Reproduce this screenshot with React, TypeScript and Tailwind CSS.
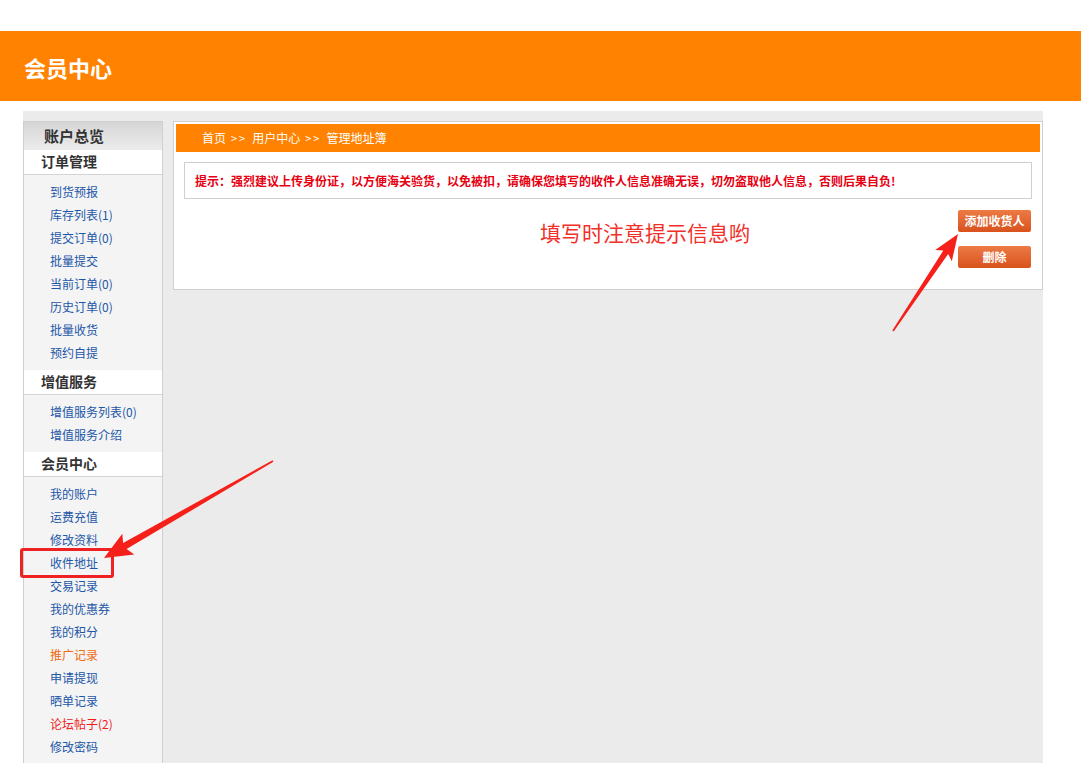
import React from "react";

type Pt = [number, number];

function arrowPoints(T: Pt, P: Pt, L: number, H: number, S: number, t: number): string {
  const dx = P[0] - T[0];
  const dy = P[1] - T[1];
  const len = Math.hypot(dx, dy);
  const ux = dx / len;
  const uy = dy / len;
  const nx = -uy;
  const ny = ux;
  const B: Pt = [P[0] - ux * L, P[1] - uy * L];
  const W: Pt = [B[0] - ux * 4, B[1] - uy * 4];
  const pts: Pt[] = [
    [T[0] + nx * t, T[1] + ny * t],
    [B[0] + nx * S, B[1] + ny * S],
    [W[0] + nx * H, W[1] + ny * H],
    P,
    [W[0] - nx * H, W[1] - ny * H],
    [B[0] - nx * S, B[1] - ny * S],
    [T[0] - nx * t, T[1] - ny * t],
  ];
  return pts.map((p) => `${p[0].toFixed(1)},${p[1].toFixed(1)}`).join(" ");
}

type LinkItem = { label: string; color?: string };

const orderLinks: LinkItem[] = [
  { label: "到货预报" },
  { label: "库存列表(1)" },
  { label: "提交订单(0)" },
  { label: "批量提交" },
  { label: "当前订单(0)" },
  { label: "历史订单(0)" },
  { label: "批量收货" },
  { label: "预约自提" },
];

const serviceLinks: LinkItem[] = [{ label: "增值服务列表(0)" }, { label: "增值服务介绍" }];

const memberLinks: LinkItem[] = [
  { label: "我的账户" },
  { label: "运费充值" },
  { label: "修改资料" },
  { label: "收件地址" },
  { label: "交易记录" },
  { label: "我的优惠券" },
  { label: "我的积分" },
  { label: "推广记录", color: "orange" },
  { label: "申请提现" },
  { label: "晒单记录" },
  { label: "论坛帖子(2)", color: "red" },
  { label: "修改密码" },
];

function SectionHeader({ title }: { title: string }) {
  return (
    <div className="h-[25px] bg-white border-b border-[#d4d4d4] pl-[17px] text-[14px] leading-[23px] font-bold text-[#333]">
      {title}
    </div>
  );
}

function LinkList({ items }: { items: LinkItem[] }) {
  return (
    <ul className="pt-[5px] pb-[6px] pl-[26px]">
      {items.map((it) => (
        <li
          key={it.label}
          className={
            "h-[23px] leading-[23px] text-[12px] " +
            (it.color === "orange"
              ? "text-[#f26a10]"
              : it.color === "red"
              ? "text-[#f01c1c]"
              : "text-[#1d57a8]")
          }
        >
          {it.label}
        </li>
      ))}
    </ul>
  );
}

export default function App() {
  const font = { fontFamily: '"Noto Sans CJK SC", "Noto Sans", sans-serif' };
  return (
    <div className="relative w-[1081px] h-[763px] overflow-hidden bg-white" style={font}>
      <div className="h-[31px]" />
      <div className="h-[70px] bg-[#ff8200] flex items-center pl-[24px]">
        <h1 className="text-white text-[22px] font-bold leading-none mt-[2px]">会员中心</h1>
      </div>
      <div className="h-[10px]" />
      <div className="ml-[23px] w-[1020px] h-[700px] bg-[#ebebeb] pt-[10px] flex items-start">
        {/* Sidebar */}
        <aside className="w-[140px] h-[700px] bg-[#f4f4f4] border border-[#cfcfcf] border-b-0">
          <div className="h-[28px] bg-gradient-to-b from-[#d6d6d6] to-[#ececec] pl-[20px] text-[15px] font-bold leading-[28px] text-[#333]">
            账户总览
          </div>
          <SectionHeader title="订单管理" />
          <LinkList items={orderLinks} />
          <SectionHeader title="增值服务" />
          <LinkList items={serviceLinks} />
          <SectionHeader title="会员中心" />
          <LinkList items={memberLinks} />
        </aside>

        {/* Main */}
        <main className="ml-[10px] flex-1 bg-white border border-[#cfcfcf] p-[2px] pb-[21px]">
          <div className="h-[28px] bg-[#ff8200] pl-[26px] text-white text-[12px] leading-[28px] flex items-center">
            <span>首页</span>
            <span className="text-[11px] tracking-[2px] mx-[5px]">&gt;&gt;</span>
            <span>用户中心</span>
            <span className="text-[11px] tracking-[2px] mx-[5px]">&gt;&gt;</span>
            <span>管理地址簿</span>
          </div>
          <div className="mx-[8px] mt-[10px] h-[37px] border border-[#cfcfcf] pl-[10px] flex items-center text-[12px] font-bold text-[#e60012]">
            提示：强烈建议上传身份证，以方便海关验货，以免被扣，请确保您填写的收件人信息准确无误，切勿盗取他人信息，否则后果自负!
          </div>
          <div className="ml-[8px] mr-[9px] mt-[11px] flex items-start">
            <div className="ml-[356px] mt-[10px] text-[21px] leading-[24px] text-[#f2302a]">
              填写时注意提示信息哟
            </div>
            <div className="ml-auto flex flex-col gap-[14px]">
              <button className="w-[73px] h-[22px] rounded-[2px] bg-gradient-to-b from-[#ec7a44] to-[#d9521c] text-white text-[12px] font-bold leading-[22px]">
                添加收货人
              </button>
              <button className="w-[73px] h-[22px] rounded-[2px] bg-gradient-to-b from-[#ec7a44] to-[#d9521c] text-white text-[12px] font-bold leading-[22px]">
                删除
              </button>
            </div>
          </div>
        </main>
      </div>

      {/* Annotation overlay */}
      <div className="absolute left-[20px] top-[548px] w-[94px] h-[30px] border-[3px] border-[#ee2222] rounded-[3px] pointer-events-none" />
      <svg className="absolute left-0 top-0 pointer-events-none" width={1081} height={763}>
        <polygon points={arrowPoints([273, 461], [104, 558], 24, 12, 3.5, 0.8)} fill="#f5201a" />
        <polygon points={arrowPoints([893, 331], [958, 234], 22, 10, 3, 0.8)} fill="#f5201a" />
      </svg>
    </div>
  );
}
